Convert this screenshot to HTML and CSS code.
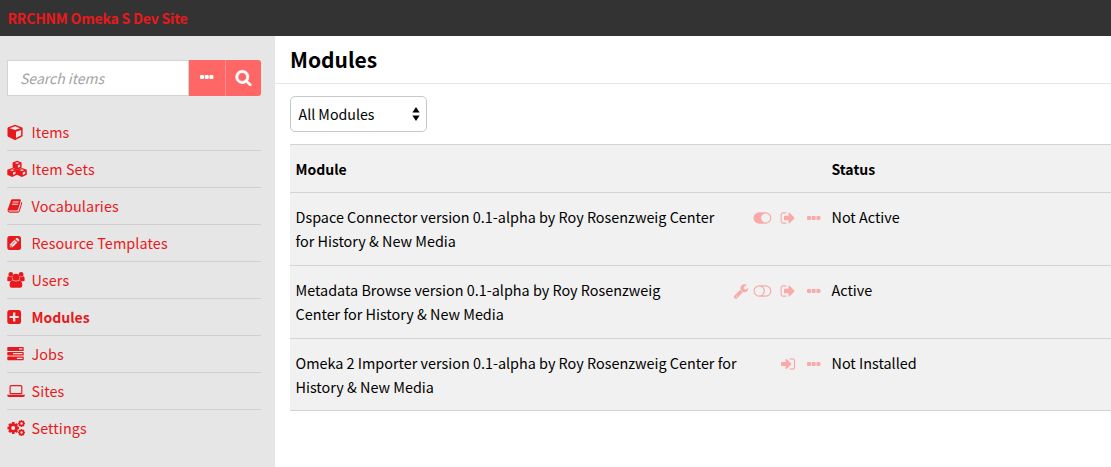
FILE: index.html
```html
<!DOCTYPE html>
<html lang="en">
<head>
<meta charset="utf-8">
<title>Modules</title>
<link rel="stylesheet" href="styles.css">
</head>
<body>
<svg class="defs" width="0" height="0">
  <symbol id="dots" viewBox="0 0 14 4"><rect x="0" y="0" width="4" height="4" rx="1"/><rect x="4.7" y="0" width="4" height="4" rx="1"/><rect x="9.4" y="0" width="4" height="4" rx="1"/></symbol>
  <symbol id="signout" viewBox="0 0 1792 1792"><path d="M704 1440q0 4 1 20t.5 26.5-3 23.5-10 19.5-20.5 6.5h-320q-119 0-203.5-84.5t-84.5-203.5v-704q0-119 84.5-203.5t203.5-84.5h320q13 0 22.5 9.5t9.5 22.5q0 4 1 20t.5 26.5-3 23.5-10 19.5-20.5 6.5h-320q-66 0-113 47t-47 113v704q0 66 47 113t113 47h312l11.5 1 11.5 3 8 5.5 7 9 2 13.5zm928-544q0 26-19 45l-544 544q-19 19-45 19t-45-19-19-45v-288h-448q-26 0-45-19t-19-45v-384q0-26 19-45t45-19h448v-288q0-26 19-45t45-19 45 19l544 544q19 19 19 45z"/></symbol>
  <symbol id="gear" viewBox="-5 -5 10 10"><circle r="2.800" fill="none" stroke="currentColor" stroke-width="2.300"/><path d="M0-4.900V-3M0 4.900V3M-4.900 0H-3M4.900 0H3M-3.400-3.400l1.200 1.200M3.400 3.400L2.200 2.200M-3.400 3.400l1.200-1.200M3.400-3.400L2.200-2.200" stroke="currentColor" stroke-width="2.100"/></symbol>
</svg>
<header class="topbar"><a class="site">RRCHNM Omeka S Dev Site</a></header>
<div class="layout">
  <aside class="sidebar">
    <form class="search">
      <div class="field">Search items</div>
      <div class="btn"><svg width="14" height="4"><use href="#dots"/></svg></div>
      <div class="btn last"><svg class="glass" width="17" height="17" viewBox="0 0 1792 1792"><path d="M1216 832q0-185-131.5-316.5t-316.5-131.5-316.5 131.5-131.5 316.5 131.5 316.5 316.5 131.5 316.5-131.5 131.5-316.5zm512 832q0 52-38 90t-90 38q-54 0-90-38l-343-342q-179 124-399 124-143 0-273.5-55.5t-225-150-150-225-55.5-273.5 55.5-273.5 150-225 225-150 273.5-55.5 273.5 55.5 225 150 150 225 55.5 273.5q0 220-124 399l343 343q37 37 37 90z"/></svg></div>
    </form>
    <nav class="menu">
      <a class="item"><svg class="ico" viewBox="0 0 20 18"><path fill-rule="evenodd" d="M8 1.800q.3 0 .7.200l6 2.200q.9.300.9 1.100v7.200q0 .8-.8 1.200l-6 3q-.8.400-1.600 0l-6-3q-.7-.4-.7-1.200V5.300q0-.8.8-1.100l6-2.200Q7.700 1.800 8 1.800zM8 3.300L2.700 5.200 8 7.100l5.300-1.900zM9 8.800v6.100l5.100-2.600V6.900z"/></svg>Items</a>
      <a class="item"><svg class="ico" viewBox="0 0 20 18"><g fill-rule="evenodd"><path d="M10.100.8l4.500 1.800v5.200l-4.500 2.100-4.500-2.100V2.600zM10.100 2.200L7.900 3.100l2.200.9 2.200-.9zM10.900 5.300v2.500l2.200-1.100V4.400z"/><path d="M5.200 7.900l4.900 1.900v5l-4.900 2.200-4.900-2.200v-5zM5.200 9.300L3 10.200l2.200.9 2.200-.9zM6 12.400v2.500l2.500-1.200v-2.300z"/><path d="M14.900 7.900l4.900 1.900v5L14.900 17 10 14.800v-5zM14.900 9.300l-2.200.9 2.200.9 2.200-.9zM15.700 12.400v2.500l2.500-1.200v-2.300z"/></g></svg>Item Sets</a>
      <a class="item"><svg class="ico" viewBox="0 0 20 18"><path transform="translate(0 1) scale(.0088)" d="M1703 478q40 57 18 129l-275 906q-19 64-76.500 107.500t-122.500 43.500h-923q-77 0-148.500-53.500t-99.500-131.500q-24-67-2-127 0-4 3-27t4-37q1-8-3-21.500t-3-19.500q2-11 8-21t16.500-23.500 16.500-23.500q23-38 45-91.500t30-91.500q3-10 .5-30t-.5-28q3-11 17-28t17-23q21-36 42-92t25-90q1-9-2.500-32t.5-28q4-13 22-30.500t22-22.500q19-26 42.500-84.500t27.500-96.500q1-8-3-25.500t-2-26.500q2-8 9-18t18-23 17-21q8-12 16.500-30.500t15-35 16-36 19.500-32 26.500-23.500 36-11.500 47.500 5.500l-1 3q38-9 51-9h761q74 0 114 56t18 130l-274 906q-36 119-71.500 153.500t-128.500 34.500h-869q-27 0-38 15-11 16-1 43 24 70 144 70h923q29 0 56-15.500t35-41.500l300-987q7-22 5-57 38 15 59 43zm-1064 2q-4 13 2 22.500t20 9.500h608q13 0 25.500-9.500t16.500-22.500l21-64q4-13-2-22.500t-20-9.500h-608q-13 0-25.500 9.500t-16.500 22.500zm-83 256q-4 13 2 22.500t20 9.500h608q13 0 25.500-9.500t16.500-22.500l21-64q4-13-2-22.500t-20-9.500h-608q-13 0-25.500 9.500t-16.500 22.500z"/></svg>Vocabularies</a>
      <a class="item"><svg class="ico" viewBox="0 0 20 18"><rect x=".3" y="2" width="13.700" height="14" rx="2.500"/><path class="cut" d="M2.800 13.300v-2.800L7.600 5.700l2.800 2.800-4.800 4.800zM8.300 5l1-1q.6-.6 1.200 0l1.600 1.600q.6.600 0 1.200l-1 1z"/><path d="M3.700 11v1.400h1.400M4.900 10.700l3.600-3.600" fill="none" stroke="currentColor" stroke-width=".7"/></svg>Resource Templates</a>
      <a class="item"><svg class="ico" viewBox="0 0 20 18"><circle cx="3.800" cy="3.400" r="2.400"/><circle cx="14.100" cy="3.400" r="2.400"/><path d="M.3 9.500V7.200Q.3 5.300 1.500 5.300L4 6.200l1.300-.4Q4.900 8 6 9.400 4.200 9.400 3.500 10.200H1.400Q.3 10.200.3 9.500zM17.600 9.500V7.200q0-1.900-1.200-1.900l-2.500.9-1.300-.4q.4 2.200-.7 3.600 1.800 0 2.500.8h2.100q1.100 0 1.100-.7z"/><circle cx="8.950" cy="6.300" r="3.500"/><path d="M5.500 9.500l3.500 1.100 3.400-1.100q2.900.2 2.900 5.100 0 2.200-2.200 2.200H4.800q-2.200 0-2.200-2.200 0-4.900 2.900-5.100z"/></svg>Users</a>
      <a class="item current"><svg class="ico" viewBox="0 0 20 18"><rect x=".3" y="2" width="13.700" height="14" rx="2.500"/><path class="cut" d="M6 4.500h2.300v3.400h3.400v2.200H8.300v3.400H6v-3.400H2.600V7.900H6z"/></svg>Modules</a>
      <a class="item"><svg class="ico" viewBox="0 0 20 18"><path fill-rule="evenodd" d="M.9 2h15.200q.6 0 .6.600v2.800q0 .6-.6.600H.9q-.6 0-.6-.6V2.600Q.3 2 .9 2zM12 3.300v1.300h3.400V3.300zM.9 6.900h15.200q.6 0 .6.600v2.400q0 .6-.6.600H.9q-.6 0-.6-.6V7.500q0-.6.6-.6zM6 8v1.200h9.400V8zM.9 11.500h15.200q.6 0 .6.600v2.500q0 .6-.6.600H.9q-.6 0-.6-.6v-2.500q0-.6.6-.6zM10 12.700V14h5.400v-1.300z"/></svg>Jobs</a>
      <a class="item"><svg class="ico" viewBox="0 0 20 18"><rect x="3.100" y="3.700" width="11.700" height="8" rx="1" fill="none" stroke="currentColor" stroke-width="1.200"/><path d="M.3 12.800h17.500v.8q0 1.300-1.600 1.300H1.900Q.3 14.900.3 13.600z"/></svg>Sites</a>
      <a class="item"><svg class="ico" viewBox="0 0 20 18"><use href="#gear" x=".2" y="3" width="12" height="12"/><use href="#gear" x="10.900" y=".9" width="7.200" height="7.200"/><use href="#gear" x="10.900" y="9.900" width="7.200" height="7.200"/></svg>Settings</a>
    </nav>
  </aside>
  <main class="content">
    <h1 class="title">Modules</h1>
    <div class="body">
      <div class="select">All Modules<svg width="8" height="14" viewBox="0 0 8 14"><path d="M4 0l3.600 5.500H.4zM4 14L.4 8.500h7.200z"/></svg></div>
      <div class="table">
        <div class="row head"><div class="name">Module</div><div>Status</div></div>
        <div class="row">
          <div class="name">Dspace Connector version 0.1-alpha by Roy Rosenzweig Center<br>for History &amp; New Media</div>
          <div class="actions">
            <svg width="19" height="12" viewBox="0 0 19 12"><path fill-rule="evenodd" d="M6.200.300h6.500a5.700 5.700 0 0 1 0 11.400H6.200A5.700 5.700 0 0 1 6.200.300zM12.700 1.500a4.500 4.500 0 0 0 0 9 4.500 4.500 0 0 0 0-9z"/></svg>
            <svg class="sign" width="16" height="16"><use href="#signout"/></svg>
            <svg width="14" height="4"><use href="#dots"/></svg>
          </div>
          <div>Not Active</div>
        </div>
        <div class="row">
          <div class="name">Metadata Browse version 0.1-alpha by Roy Rosenzweig<br>Center for History &amp; New Media</div>
          <div class="actions">
            <svg class="wrench" width="16" height="16" viewBox="0 0 1792 1792"><path d="M448 1472q0-26-19-45t-45-19-45 19-19 45 19 45 45 19 45-19 19-45zm644-420l-682 682q-37 37-90 37-52 0-91-37l-106-108q-38-36-38-90 0-53 38-91l681-681q39 98 114.500 173.500t173.500 114.500zm634-435q0 39-23 106-47 134-164.500 217.500t-258.500 83.500q-185 0-316.500-131.500t-131.500-316.500 131.500-316.500 316.500-131.500q58 0 121.500 16.500t107.500 46.500q16 11 16 28t-16 28l-293 169v224l193 107q5-3 79-48.500t135.500-81 70.500-35.500q15 0 23.500 10t8.500 25z"/></svg>
            <svg width="19" height="12" viewBox="0 0 19 12"><path d="M6.200.900h6.500a5.100 5.100 0 0 1 0 10.200H6.200A5.100 5.100 0 0 1 6.200.900zM6.200.900a5.100 5.100 0 0 1 0 10.200" fill="none" stroke="currentColor" stroke-width="1.200"/></svg>
            <svg class="sign" width="16" height="16"><use href="#signout"/></svg>
            <svg width="14" height="4"><use href="#dots"/></svg>
          </div>
          <div>Active</div>
        </div>
        <div class="row">
          <div class="name">Omeka 2 Importer version 0.1-alpha by Roy Rosenzweig Center for<br>History &amp; New Media</div>
          <div class="actions">
            <svg class="sign" width="16" height="16" viewBox="0 0 16 16"><path d="M1.600 6h4V3.400q0-.6.500-.6.200 0 .4.200l4.700 4.600q.4.400 0 .8l-4.700 4.700q-.2.200-.4.200-.5 0-.5-.6V10h-4q-.6 0-.6-.6V6.600Q1 6 1.600 6z"/><path d="M9.600 2.900h3q1.900 0 1.900 1.900v6.400q0 1.900-1.900 1.900h-3" fill="none" stroke="currentColor" stroke-width="1.200"/></svg>
            <svg width="14" height="4"><use href="#dots"/></svg>
          </div>
          <div>Not Installed</div>
        </div>
      </div>
    </div>
  </main>
</div>
</body>
</html>
```
FILE: styles.css
```css
* { box-sizing: border-box; }
body {
  margin: 0;
  height: 467px;
  overflow: hidden;
  font: 14.4px/24px "Noto Sans CJK SC", "Open Sans", sans-serif;
  color: #000;
  background: #fff;
}
svg { fill: currentColor; flex: none; display: block; }
.defs { position: absolute; }
.topbar {
  height: 36px;
  padding: 6px 7.500px;
  background: #333;
  color: #e8191c;
  font-size: 14px;
  font-weight: 700;
  letter-spacing: -.2px;
}
.layout { display: flex; height: 431px; }
.sidebar { width: 275px; padding: 24px 14px 0 7px; background: #e6e6e6; }
.search { display: flex; height: 36px; margin: 0 0 18px; }
.field {
  width: 182px;
  padding: 5px 12px;
  border: 1px solid #d3d3d3;
  background: #fff;
  color: #a3a3a3;
  font-size: 14px;
  font-style: italic;
}
.btn {
  display: flex;
  width: 36px;
  align-items: center;
  justify-content: center;
  padding-bottom: 2px;
  background: #f66;
  color: #fff;
}
.last { border-left: 1px solid #ff8c8c; border-radius: 0 3px 3px 0; }
.glass { stroke: currentColor; stroke-width: 50; }
.item {
  display: flex;
  height: 37px;
  align-items: center;
  gap: 4.500px;
  border-bottom: 1px solid #d0d0d0;
  color: #e8191c;
  letter-spacing: .1px;
}
.item:last-child { border-color: transparent; }
.current { font-size: 14px; font-weight: 700; letter-spacing: 0; }
.ico { width: 20px; height: 18px; }
.cut { fill: #e6e6e6; }
.content { flex: 1; }
.title {
  height: 48px;
  margin: 0;
  padding: 0 15px;
  border-bottom: 1px solid #e6e6e6;
  font-size: 21px;
  line-height: 47px;
}
.body { padding: 12px 0 0 15px; }
.select {
  display: flex;
  width: 137px;
  height: 36px;
  align-items: center;
  justify-content: space-between;
  padding: 0 6px 0 7.500px;
  border: 1px solid #c8c8c8;
  border-radius: 5px;
  font-size: 14.200px;
}
.table { margin-top: 12px; border-top: 1px solid #d3d3d3; background: #f1f1f1; }
.row {
  display: grid;
  grid-template-columns: 536px 1fr;
  height: 73px;
  padding: 12px 0 0 5.500px;
  border-bottom: 1px solid #d3d3d3;
}
.row:last-child { height: 72px; }
.head { height: 48px; font-size: 14px; font-weight: 700; }
.name { grid-area: 1 / 1; white-space: nowrap; }
.actions {
  grid-area: 1 / 1;
  display: flex;
  height: 24px;
  align-items: center;
  justify-content: flex-end;
  padding: 2px 11px 0 0;
  color: #faa9a9;
}
.sign { margin: 0 11px 0 8px; }
.wrench { margin-right: 4px; }
```
